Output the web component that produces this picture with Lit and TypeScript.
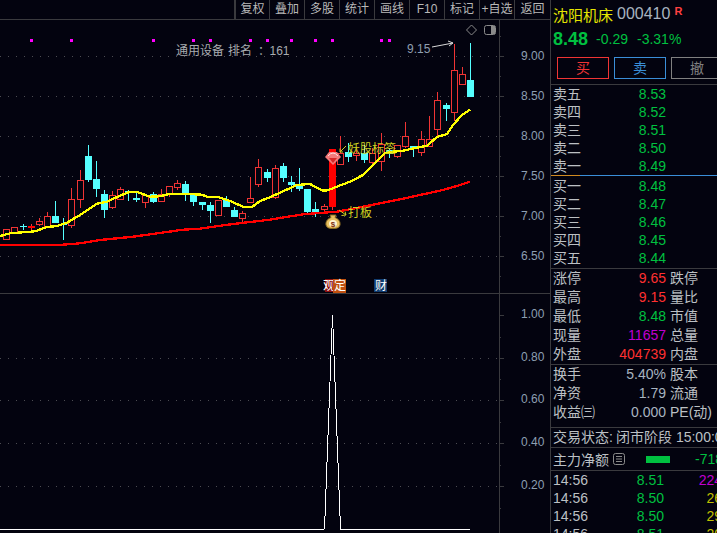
import { LitElement, html, css, svg } from "lit";
import { customElement } from "lit/decorators.js";

type Candle = [number, number, number, number, number, "r" | "c" | "s"];
const candles: Candle[] = [
  [6,229,229,239,240,"r"],[14,227,227,233,233,"r"],[23,224,226,227,230,"c"],[31,224,226,228,230,"s"],
  [39,218,221,224,226,"r"],[47,212,216,227,227,"r"],[55,201,216,223,223,"c"],[63,218,224,225,240,"c"],
  [71,188,199,225,228,"r"],[80,170,180,199,208,"r"],[88,145,156,180,182,"c"],[96,161,179,189,197,"c"],
  [104,190,194,210,218,"c"],[112,191,195,207,209,"r"],[120,187,189,199,200,"r"],[128,190,191,192,201,"c"],
  [136,193,198,200,202,"c"],[145,195,195,202,208,"r"],[153,192,194,202,203,"c"],[161,189,194,201,201,"r"],
  [169,186,186,194,197,"r"],[177,180,183,187,190,"r"],[185,181,184,194,201,"c"],[193,194,195,202,206,"c"],
  [202,202,202,205,210,"c"],[210,202,205,211,223,"c"],[218,200,200,215,215,"r"],[226,196,200,207,207,"c"],
  [234,207,210,217,217,"c"],[242,211,213,218,223,"r"],[250,177,198,202,202,"r"],[258,159,167,184,187,"r"],
  [267,169,172,178,182,"c"],[275,165,168,197,199,"r"],[283,163,166,178,182,"c"],[291,176,182,185,192,"c"],
  [299,168,184,189,191,"c"],[307,189,189,212,214,"c"],[315,202,209,213,217,"c"],[324,204,206,209,212,"r"],
  [332,149,149,207,210,"s"],[340,136,153,164,164,"r"],[348,143,152,157,162,"c"],[356,150,153,155,161,"r"],
  [364,145,153,160,163,"c"],[372,148,153,162,164,"r"],[381,133,144,161,171,"r"],[389,148,150,154,158,"c"],
  [397,145,145,156,158,"r"],[405,122,136,146,148,"r"],[413,146,146,148,157,"c"],[421,131,139,152,156,"r"],
  [429,116,139,146,146,"r"],[437,92,100,129,136,"r"],[446,103,105,109,121,"c"],[454,44,70,112,121,"r"],
  [462,67,74,84,85,"r"],[470,43,80,97,97,"c"],
];

const yellow = [
  [0,236],[10,233.3],[23,232.3],[35,231.3],[47,227],[57,226],[67,222.7],[80,215],[97,203.7],[107,201.7],
  [120,195.7],[130,191.7],[137,192],[150,196.7],[160,196.3],[170,193.7],[183,193.7],[202,194.7],[207,196.7],
  [218,197],[230,201],[243,206.7],[252,207],[260,201],[270,197.3],[283,191.3],[297,185],[310,184],[323,190.7],
  [328,190.3],[335,187.3],[350,181.7],[363,175],[373,165],[385,153.3],[393,151.7],[403,150.7],[417,147.7],
  [427,145.7],[437,137],[447,134],[453,125],[462,115],[470,109.7],
];
const redLine = [
  [0,245],[63,244.7],[80,243.3],[100,240],[133,236.7],[167,232],[183,229.7],[200,228.7],[233,224],[270,219.7],
  [303,214.3],[337,211.7],[363,206.7],[403,198.7],[443,190],[460,185],[470,181.7],
];
const toPts = (p: number[][]) => p.map((q) => q.join(",")).join(" ");

const renderCandle = ([c, wt, bt, bb, wb, k]: Candle) => {
  const x = c + 0.5;
  if (k === "c") {
    return svg`<line class="cy" x1=${x} x2=${x} y1=${wt} y2=${wb}></line>
      <rect class="cyf" x=${c - 3} y=${bt} width="7" height=${Math.max(bb - bt, 1)}></rect>`;
  }
  if (k === "s") {
    return svg`<line class="rd" x1=${x} x2=${x} y1=${wt} y2=${wb}></line>
      <rect class="rdf" x=${c - 3} y=${bt} width="7" height=${bb - bt}></rect>`;
  }
  return svg`<line class="rd" x1=${x} x2=${x} y1=${wt} y2=${bt}></line>
    <line class="rd" x1=${x} x2=${x} y1=${bb} y2=${wb}></line>
    <rect class="rd hollow" x=${c - 2.5} y=${bt + 0.5} width="6" height=${bb - bt}></rect>`;
};

const grid = (ys: number[]) =>
  ys.map((y) => svg`<line class="dot" x1="0" x2="498" y1=${y + 0.5} y2=${y + 0.5}></line>`);
const ticks = (ys: number[], len: number) =>
  ys.map((y) => svg`<line class="axis" x1="499" x2=${499 + len} y1=${y + 0.5} y2=${y + 0.5}></line>`);

const magenta = [30, 70, 152, 192, 209, 249, 266, 290, 314, 331, 380, 388];
const mainLevels: [number, string][] = [[56,"9.00"],[96,"8.50"],[136,"8.00"],[176,"7.50"],[216,"7.00"],[256,"6.50"]];
const subLevels: [number, string][] = [[315,"1.00"],[358,"0.80"],[400,"0.60"],[443,"0.40"],[486,"0.20"]];

const tools = ["复权","叠加","多股","统计","画线","F10","标记","+自选","返回"];
const sells: [string, string][] = [["卖五","8.53"],["卖四","8.52"],["卖三","8.51"],["卖二","8.50"],["卖一","8.49"]];
const buys: [string, string][] = [["买一","8.48"],["买二","8.47"],["买三","8.46"],["买四","8.45"],["买五","8.44"]];
const stats: [string, string, string, string][] = [
  ["涨停","9.65","up","跌停"],["最高","9.15","up","量比"],["最低","8.48","down","市值"],
  ["现量","11657","magt","总量"],["外盘","404739","up","内盘"],
];
const stats2: [string, string, string, string][] = [
  ["换手","5.40%","flat","股本"],["净资","1.79","flat","流通"],["收益㈢","0.000","flat","PE(动)"],
];
const ticksData: [string, string, string, string][] = [
  ["14:56","8.51","224","magt"],["14:56","8.50","26","olit"],["14:56","8.50","29","olit"],["14:56","8.51","20","olit"],
];

@customElement("app-root")
export class AppRoot extends LitElement {
  static styles = css`
    :host { display: block; width: 717px; height: 533px; overflow: hidden; background: #03030f;
      font-family: "Liberation Sans", "Noto Sans CJK SC", sans-serif; color: #bcc0c4; }
    .root { display: flex; width: 717px; height: 533px; }
    .left { width: 550px; flex: none; display: flex; flex-direction: column; }
    .toolbar { height: 19px; flex: none; display: flex; justify-content: flex-end; border-bottom: 1px solid #3a3a3e; }
    .tool { width: 35px; box-sizing: border-box; border-right: 1px solid #3a3a3e; font-size: 12px; line-height: 18px;
      text-align: center; white-space: nowrap; color: #b8b8b8; }
    .tool:first-child { width: 36px; border-left: 2px solid #3a3a3e; }
    .tool:last-child { border-right: none; }
    svg { display: block; flex: none; }
    .main { border-bottom: 1px solid #3a3a3e; }
    .dot { stroke: #4c4c52; stroke-width: 1; stroke-dasharray: 1 7; }
    .axis { stroke: #3a3a3e; stroke-width: 1; shape-rendering: crispEdges; }
    .rd { stroke: #f03434; stroke-width: 1; shape-rendering: crispEdges; fill: none; }
    .hollow { fill: #03030f; }
    .rdf { fill: #f00; }
    .cy { stroke: #55ffff; stroke-width: 1; shape-rendering: crispEdges; }
    .cyf { fill: #55ffff; }
    .ma { fill: none; stroke-width: 2.3; shape-rendering: crispEdges; stroke-linejoin: round; }
    .my { stroke: #ffff00; }
    .mr { stroke: #ff0000; }
    .mag { fill: #f0f; }
    .lbl { font-size: 12px; fill: #8d9fb2; }
    .note { font-size: 12px; fill: #a8acb0; }
    .hint { font-size: 12px; fill: #8f9fb0; }
    .yt { font-size: 12px; fill: #d0d020; }
    .ya { stroke: #d0d020; stroke-width: 1; fill: none; }
    .wa { stroke: #d8d8d8; stroke-width: 1; fill: none; }
    .icon { stroke: #8a8a8a; fill: none; stroke-width: 1; }
    .iconf { fill: #8a8a8a; }
    .wl { fill: none; stroke: #fff; stroke-width: 1; shape-rendering: crispEdges; }
    .base { stroke: #fff; stroke-width: 1; shape-rendering: crispEdges; }
    .tagt { font-size: 12px; fill: #fff; }
    .panel { width: 167px; box-sizing: border-box; flex: none; border-left: 1px solid #3a3a3e; overflow: hidden; }
    .title { height: 28px; display: flex; align-items: center; padding-left: 2px; white-space: nowrap; }
    .name { font-size: 15px; color: #e6e600; }
    .code { font-size: 16px; color: #a8b4c0; margin-left: 4px; }
    .rflag { font-size: 11px; font-weight: bold; color: #ff4040; margin: -6px 0 0 4px; }
    .price { height: 22px; display: flex; align-items: center; padding-left: 2px; color: #00c040; font-size: 14px; white-space: nowrap; }
    .big { font-size: 18px; font-weight: bold; margin-right: 8px; }
    .pct { margin-left: 9px; }
    .actions { display: flex; gap: 5px; padding: 7px 0 5px 6px; border-bottom: 1px solid #3a3a3e; }
    .btn { flex: none; width: 52px; height: 22px; box-sizing: border-box; border: 1px solid; text-align: center; font-size: 14px; line-height: 20px; }
    .b-buy { border-color: #f03434; color: #f03434; }
    .b-sell { border-color: #3a8ed8; color: #3a8ed8; }
    .b-cancel { border-color: #808080; color: #808080; }
    .book { height: 90px; }
    .book.buy { padding-top: 1px; height: 91px; border-bottom: 1px solid #3a3a3e; }
    .mid { height: 1px; background: linear-gradient(to right, #d08a20 29px, #3a8ed8 29px); }
    .row { display: grid; grid-template-columns: 40px 73px 1fr; padding-left: 2px; font-size: 14px; white-space: nowrap; }
    .row.r18 { height: 18px; line-height: 18px; }
    .row.r19 { height: 19px; line-height: 19px; }
    .val { text-align: right; }
    .rl { margin-left: 4px; }
    .up { color: #ff3030; }
    .down { color: #00c040; }
    .flat { color: #a8b4c0; }
    .magt { color: #c000d0; }
    .olit { color: #c0c000; }
    .sect { border-bottom: 1px solid #3a3a3e; }
    .pad5 { padding-bottom: 5px; }
    .status { height: 19px; line-height: 19px; font-size: 14px; padding-left: 2px; white-space: nowrap; border-bottom: 1px solid #3a3a3e; display: flex; }
    .status .s2 { margin-left: 3px; }
    .status .s3 { margin-left: 4px; }
    .flow { height: 22px; display: flex; align-items: center; padding-left: 2px; font-size: 14px; white-space: nowrap; border-bottom: 1px solid #3a3a3e; }
    .flowicon { margin-left: 4px; }
    .flowbar { width: 24px; height: 7px; background: #00c040; margin-left: 21px; flex: none; }
    .flowval { color: #00c040; margin-left: 25px; }
    .tick { display: grid; grid-template-columns: 40px 71px 58px; padding-left: 2px; height: 18px; line-height: 18px; font-size: 14px; white-space: nowrap; }
  `;

  private renderMain() {
    const minor = [76, 116, 156, 196, 236, 36, 276];
    return html`<svg class="main" width="550" height="273" viewBox="0 20 550 273">
      ${grid(mainLevels.map((l) => l[0]))}
      <line class="axis" x1="499.5" x2="499.5" y1="20" y2="293"></line>
      ${ticks(mainLevels.map((l) => l[0]), 5)} ${ticks(minor, 2)}
      ${mainLevels.map(([y, t]) => svg`<text class="lbl" x="521" y=${y + 4}>${t}</text>`)}
      ${magenta.map((x) => svg`<rect class="mag" x=${x} y="39" width="3" height="3"></rect>`)}
      <text class="note" y="55"><tspan x="176">通用设备</tspan><tspan x="228">排名</tspan><tspan x="258">：</tspan><tspan x="269.500">161</tspan></text>
      ${candles.map(renderCandle)}
      <polyline class="ma mr" points=${toPts(redLine)}></polyline>
      <polyline class="ma my" points=${toPts(yellow)}></polyline>
      <text class="hint" x="407" y="53">9.15</text>
      <path class="wa" d="M432 47 L453 43 M448 41 L453 43 L449 46"></path>
      <path class="icon" d="M471.500 25 L476.500 30 L471.500 35 L466.500 30 Z"></path>
      <rect class="icon" x="484.500" y="25.500" width="11" height="9" rx="2"></rect>
      <rect class="iconf" x="491" y="26" width="4" height="8"></rect>
      <path fill="#f47a7a" d="M325 157 L329 152 L337 152 L341 157 L333 165 Z"></path>
      <path fill="none" stroke="#ffe0e0" d="M328 156 Q333 150 338 156"></path>
      <path fill="#d82828" d="M329 158 L337 158 L333 163 Z"></path>
      <path class="ya" d="M340 152 L346 146 M340 148.500 L340 152 L343 152"></path>
      <text class="yt" x="348" y="153">妖股标签</text>
      <path fill="#e8c060" stroke="#8a6a20" d="M330 215 L336 215 L335 217.500 C339 219 340.500 222 340 225 C339.500 228 336 228.500 333 228.500 C330 228.500 326.500 228 326 225 C325.500 222 327 219 331 217.500 Z"></path>
      <ellipse cx="333" cy="223.500" rx="4" ry="3.500" fill="#fff4d0"></ellipse>
      <text x="333" y="226.500" font-size="8" font-weight="bold" text-anchor="middle" fill="#803010">$</text>
      <path class="ya" d="M339 210 L346 215 M341.500 215.500 L346 215 L345 211.500"></path>
      <text class="yt" x="348" y="217">打板</text>
      <rect x="325" y="279" width="9" height="13" fill="#8c1010"></rect>
      <text class="tagt" x="323" y="290">观</text>
      <rect x="333" y="279" width="13" height="14" fill="#c05010"></rect>
      <text class="tagt" x="334" y="290">定</text>
      <rect x="374" y="279" width="13" height="13" fill="#103c70"></rect>
      <text class="tagt" x="375" y="290">财</text>
    </svg>`;
  }

  private renderSub() {
    const minor = [337, 379, 422, 465, 508];
    return html`<svg width="550" height="239" viewBox="0 294 550 239">
      ${grid(subLevels.slice(1).map((l) => l[0]))}
      <line class="axis" x1="499.5" x2="499.5" y1="294" y2="533"></line>
      ${ticks(subLevels.map((l) => l[0]), 5)} ${ticks(minor, 2)}
      ${subLevels.map(([y, t]) => svg`<text class="lbl" x="521" y=${y + 3}>${t}</text>`)}
      <line class="base" x1="0" x2="324" y1="529.500" y2="529.500"></line>
      <line class="base" x1="340" x2="470" y1="529.500" y2="529.500"></line>
      <polyline class="wl" points="324.500,529.500 332.500,315 340.500,529.500"></polyline>
    </svg>`;
  }

  render() {
    return html`<div class="root">
      <div class="left">
        <div class="toolbar">${tools.map((t) => html`<div class="tool">${t}</div>`)}</div>
        ${this.renderMain()}
        ${this.renderSub()}
      </div>
      <div class="panel">
        <div class="title"><span class="name">沈阳机床</span><span class="code">000410</span><span class="rflag">R</span></div>
        <div class="price"><span class="big">8.48</span><span>-0.29</span><span class="pct">-3.31%</span></div>
        <div class="actions">
          <div class="btn b-buy">买</div><div class="btn b-sell">卖</div><div class="btn b-cancel">撤</div>
        </div>
        <div class="book">${sells.map(([l, v]) => html`<div class="row r18"><span>${l}</span><span class="val down">${v}</span></div>`)}</div>
        <div class="mid"></div>
        <div class="book buy">${buys.map(([l, v]) => html`<div class="row r18"><span>${l}</span><span class="val down">${v}</span></div>`)}</div>
        <div class="sect">${stats.map(([l, v, c, r]) => html`<div class="row r19"><span>${l}</span><span class="val ${c}">${v}</span><span class="rl">${r}</span></div>`)}</div>
        <div class="sect pad5">${stats2.map(([l, v, c, r]) => html`<div class="row r19"><span>${l}</span><span class="val ${c}">${v}</span><span class="rl">${r}</span></div>`)}</div>
        <div class="status"><span>交易状态:</span><span class="s2">闭市阶段</span><span class="s3">15:00:00</span></div>
        <div class="flow">
          <span>主力净额</span>
          <svg class="flowicon" width="12" height="12" viewBox="0 0 12 12"><rect class="icon" x="0.500" y="0.500" width="11" height="11" rx="2"></rect><path class="icon" d="M3 3.500H9M3 6H9M3 8.500H9"></path></svg>
          <span class="flowbar"></span>
          <span class="flowval">-718</span>
        </div>
        ${ticksData.map(([t, p, v, c]) => html`<div class="tick"><span>${t}</span><span class="val down">${p}</span><span class="val ${c}">${v}</span></div>`)}
      </div>
    </div>`;
  }
}
